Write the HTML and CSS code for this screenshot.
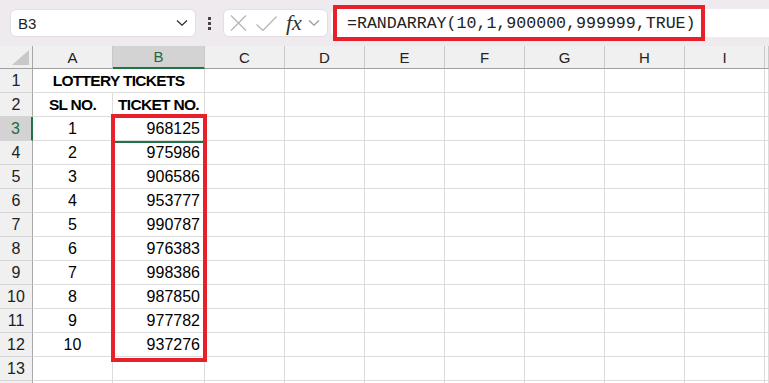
FILE: index.html
```html
<!DOCTYPE html>
<html lang="en">
<head>
    <meta charset="UTF-8">
    <meta name="viewport" content="width=device-width, initial-scale=1.0">
    <title>Lottery Tickets - RANDARRAY</title>
    <link rel="stylesheet" href="styles.css">
</head>
<body>

    <div class="toolbar">
        <div class="name-box">
            <span>B3</span>
            <svg class="chev" width="12" height="6" viewBox="0 0 12 6"><path d="M1 0.5 L6 5.2 L11 0.5" fill="none" stroke="#333" stroke-width="1.3"/></svg>
        </div>
        <div class="kebab"><i></i><i></i><i></i></div>
        <div class="fn-box">
            <svg width="17" height="16" viewBox="0 0 17 16"><path d="M1 0.5 L16 15.5 M16 0.5 L1 15.5" stroke="#b4b4b4" stroke-width="1.2"/></svg>
            <svg width="21" height="15" viewBox="0 0 21 15"><path d="M0.5 8.5 L7 14.5 L20.5 0.5" fill="none" stroke="#b4b4b4" stroke-width="1.2"/></svg>
            <span class="fx">fx</span>
            <svg width="12" height="6" viewBox="0 0 12 6"><path d="M1 0.5 L6 5.2 L11 0.5" fill="none" stroke="#9a9a9a" stroke-width="1.2"/></svg>
        </div>
        <div class="formula">
            <span>=RANDARRAY(10,1,900000,999999,TRUE)</span>
            <div class="mark formula-mark"></div>
        </div>
    </div>

    <div class="sheet">
        <!-- column headers -->
        <div class="corner"><svg width="17" height="15" viewBox="0 0 17 15"><path d="M17 0 L17 15 L0 15 Z" fill="#c8c8c8"/></svg></div>
        <div class="ch">A</div>
        <div class="ch active">B</div>
        <div class="ch">C</div>
        <div class="ch">D</div>
        <div class="ch">E</div>
        <div class="ch">F</div>
        <div class="ch">G</div>
        <div class="ch">H</div>
        <div class="ch">I</div>
        <div class="ch"></div>

        <div class="rh">1</div>
        <div class="c title">LOTTERY TICKETS</div>
        <div class="c"></div><div class="c"></div><div class="c"></div><div class="c"></div><div class="c"></div><div class="c"></div><div class="c"></div><div class="c"></div>

        <div class="rh">2</div>
        <div class="c head">SL NO.</div>
        <div class="c head">TICKET NO.</div>
        <div class="c"></div><div class="c"></div><div class="c"></div><div class="c"></div><div class="c"></div><div class="c"></div><div class="c"></div><div class="c"></div>

        <div class="rh active">3</div>
        <div class="c mid">1</div>
        <div class="c num">968125</div>
        <div class="c"></div><div class="c"></div><div class="c"></div><div class="c"></div><div class="c"></div><div class="c"></div><div class="c"></div><div class="c"></div>

        <div class="rh">4</div>
        <div class="c mid">2</div>
        <div class="c num">975986</div>
        <div class="c"></div><div class="c"></div><div class="c"></div><div class="c"></div><div class="c"></div><div class="c"></div><div class="c"></div><div class="c"></div>

        <div class="rh">5</div>
        <div class="c mid">3</div>
        <div class="c num">906586</div>
        <div class="c"></div><div class="c"></div><div class="c"></div><div class="c"></div><div class="c"></div><div class="c"></div><div class="c"></div><div class="c"></div>

        <div class="rh">6</div>
        <div class="c mid">4</div>
        <div class="c num">953777</div>
        <div class="c"></div><div class="c"></div><div class="c"></div><div class="c"></div><div class="c"></div><div class="c"></div><div class="c"></div><div class="c"></div>

        <div class="rh">7</div>
        <div class="c mid">5</div>
        <div class="c num">990787</div>
        <div class="c"></div><div class="c"></div><div class="c"></div><div class="c"></div><div class="c"></div><div class="c"></div><div class="c"></div><div class="c"></div>

        <div class="rh">8</div>
        <div class="c mid">6</div>
        <div class="c num">976383</div>
        <div class="c"></div><div class="c"></div><div class="c"></div><div class="c"></div><div class="c"></div><div class="c"></div><div class="c"></div><div class="c"></div>

        <div class="rh">9</div>
        <div class="c mid">7</div>
        <div class="c num">998386</div>
        <div class="c"></div><div class="c"></div><div class="c"></div><div class="c"></div><div class="c"></div><div class="c"></div><div class="c"></div><div class="c"></div>

        <div class="rh">10</div>
        <div class="c mid">8</div>
        <div class="c num">987850</div>
        <div class="c"></div><div class="c"></div><div class="c"></div><div class="c"></div><div class="c"></div><div class="c"></div><div class="c"></div><div class="c"></div>

        <div class="rh">11</div>
        <div class="c mid">9</div>
        <div class="c num">977782</div>
        <div class="c"></div><div class="c"></div><div class="c"></div><div class="c"></div><div class="c"></div><div class="c"></div><div class="c"></div><div class="c"></div>

        <div class="rh">12</div>
        <div class="c mid">10</div>
        <div class="c num">937276</div>
        <div class="c"></div><div class="c"></div><div class="c"></div><div class="c"></div><div class="c"></div><div class="c"></div><div class="c"></div><div class="c"></div>

        <div class="rh">13</div>
        <div class="c"></div><div class="c"></div><div class="c"></div><div class="c"></div><div class="c"></div><div class="c"></div><div class="c"></div><div class="c"></div><div class="c"></div><div class="c"></div>

        <div class="rh"></div>
        <div class="c"></div><div class="c"></div><div class="c"></div><div class="c"></div><div class="c"></div><div class="c"></div><div class="c"></div><div class="c"></div><div class="c"></div><div class="c"></div>

        <!-- active cell + highlighted range -->
        <div class="selection"></div>
        <div class="mark range-mark"></div>
    </div>

</body>
</html>
```

FILE: styles.css
```css
body {
    margin: 0;
    font-family: "Liberation Sans", Arial, sans-serif;
    background: #ffffff;
    color: #000;
    overflow: hidden;
}


.toolbar {
    display: flex;
    align-items: center;
    height: 46px;
    padding-left: 10px;
    background: #eeeaee;
    box-sizing: border-box;
}

.name-box {
    display: flex;
    align-items: center;
    justify-content: space-between;
    width: 186px;
    height: 28px;
    padding: 0 7px;
    box-sizing: border-box;
    background: #fff;
    border: 1px solid #e2dee2;
    border-radius: 6px;
    font-size: 15px;
    color: #222;
}

.kebab {
    display: flex;
    flex-direction: column;
    align-items: center;
    justify-content: center;
    gap: 2px;
    width: 27px;
    height: 28px;
}

.kebab i {
    display: block;
    width: 3px;
    height: 3px;
    background: #454545;
}

.fn-box {
    display: flex;
    align-items: center;
    width: 105px;
    height: 28px;
    padding-left: 6px;
    box-sizing: border-box;
    background: #fff;
    border: 1px solid #e2dee2;
    border-radius: 6px;
    gap: 9px;
}

.fn-box .fx {
    font-family: "Liberation Serif", "Times New Roman", serif;
    font-style: italic;
    font-size: 22px;
    color: #333;
    margin-right: -3px;
    line-height: 1;
}

.formula {
    position: relative;
    flex: 1;
    height: 28px;
    margin-left: 3px;
    padding-left: 16px;
    display: flex;
    align-items: center;
    background: #fff;
    border-radius: 6px 0 0 6px;
    font-family: "Liberation Mono", "Courier New", monospace;
    font-size: 16.6px;
    color: #222;
}

.mark {
    position: absolute;
    border: 4px solid #e8202a;
    box-sizing: border-box;
}

.formula-mark {
    left: 2px;
    top: -4px;
    width: 372px;
    height: 36px;
}


.sheet {
    position: relative;
    display: grid;
    grid-template-columns: 33px 80px 92px repeat(7, 80px) 1fr;
    grid-template-rows: 23px;
    grid-auto-rows: 24px;
    font-size: 16px;
}

.corner {
    display: flex;
    align-items: flex-end;
    justify-content: flex-end;
    padding: 0 3px 3px 0;
    background: #f0f0f0;
    border-right: 1px solid #a8a8a8;
    border-bottom: 1px solid #a0a0a0;
    box-sizing: border-box;
}

.ch {
    display: flex;
    align-items: center;
    justify-content: center;
    background: #f0f0f0;
    border-right: 1px solid #c8c8c8;
    border-bottom: 1px solid #a0a0a0;
    box-sizing: border-box;
    font-size: 15px;
    color: #222;
}

.ch.active {
    background: #d3d3d3;
    color: #1b6b3e;
    border-bottom: 2px solid #217346;
}

.rh {
    display: flex;
    align-items: center;
    justify-content: center;
    background: #f0f0f0;
    border-right: 1px solid #a8a8a8;
    border-bottom: 1px solid #d4d4d4;
    box-sizing: border-box;
    font-size: 16px;
    color: #222;
}

.rh.active {
    background: #d3d3d3;
    color: #1b6b3e;
    border-right: 2px solid #217346;
}

.c {
    display: flex;
    align-items: center;
    border-right: 1px solid #dcdcdc;
    border-bottom: 1px solid #dcdcdc;
    box-sizing: border-box;
}

.title {
    grid-column: span 2;
    justify-content: center;
    font-weight: bold;
    font-size: 15.5px;
    letter-spacing: -0.7px;
}

.head {
    justify-content: center;
    font-weight: bold;
    font-size: 15.5px;
    letter-spacing: -0.7px;
}

.mid {
    justify-content: center;
}

.num {
    justify-content: flex-end;
    padding-right: 4px;
}

.selection {
    position: absolute;
    left: 112px;
    top: 69px;
    width: 94px;
    height: 28px;
    border: 2px solid #217346;
    box-sizing: border-box;
}

.range-mark {
    left: 111px;
    top: 68px;
    width: 96px;
    height: 248px;
}
```
